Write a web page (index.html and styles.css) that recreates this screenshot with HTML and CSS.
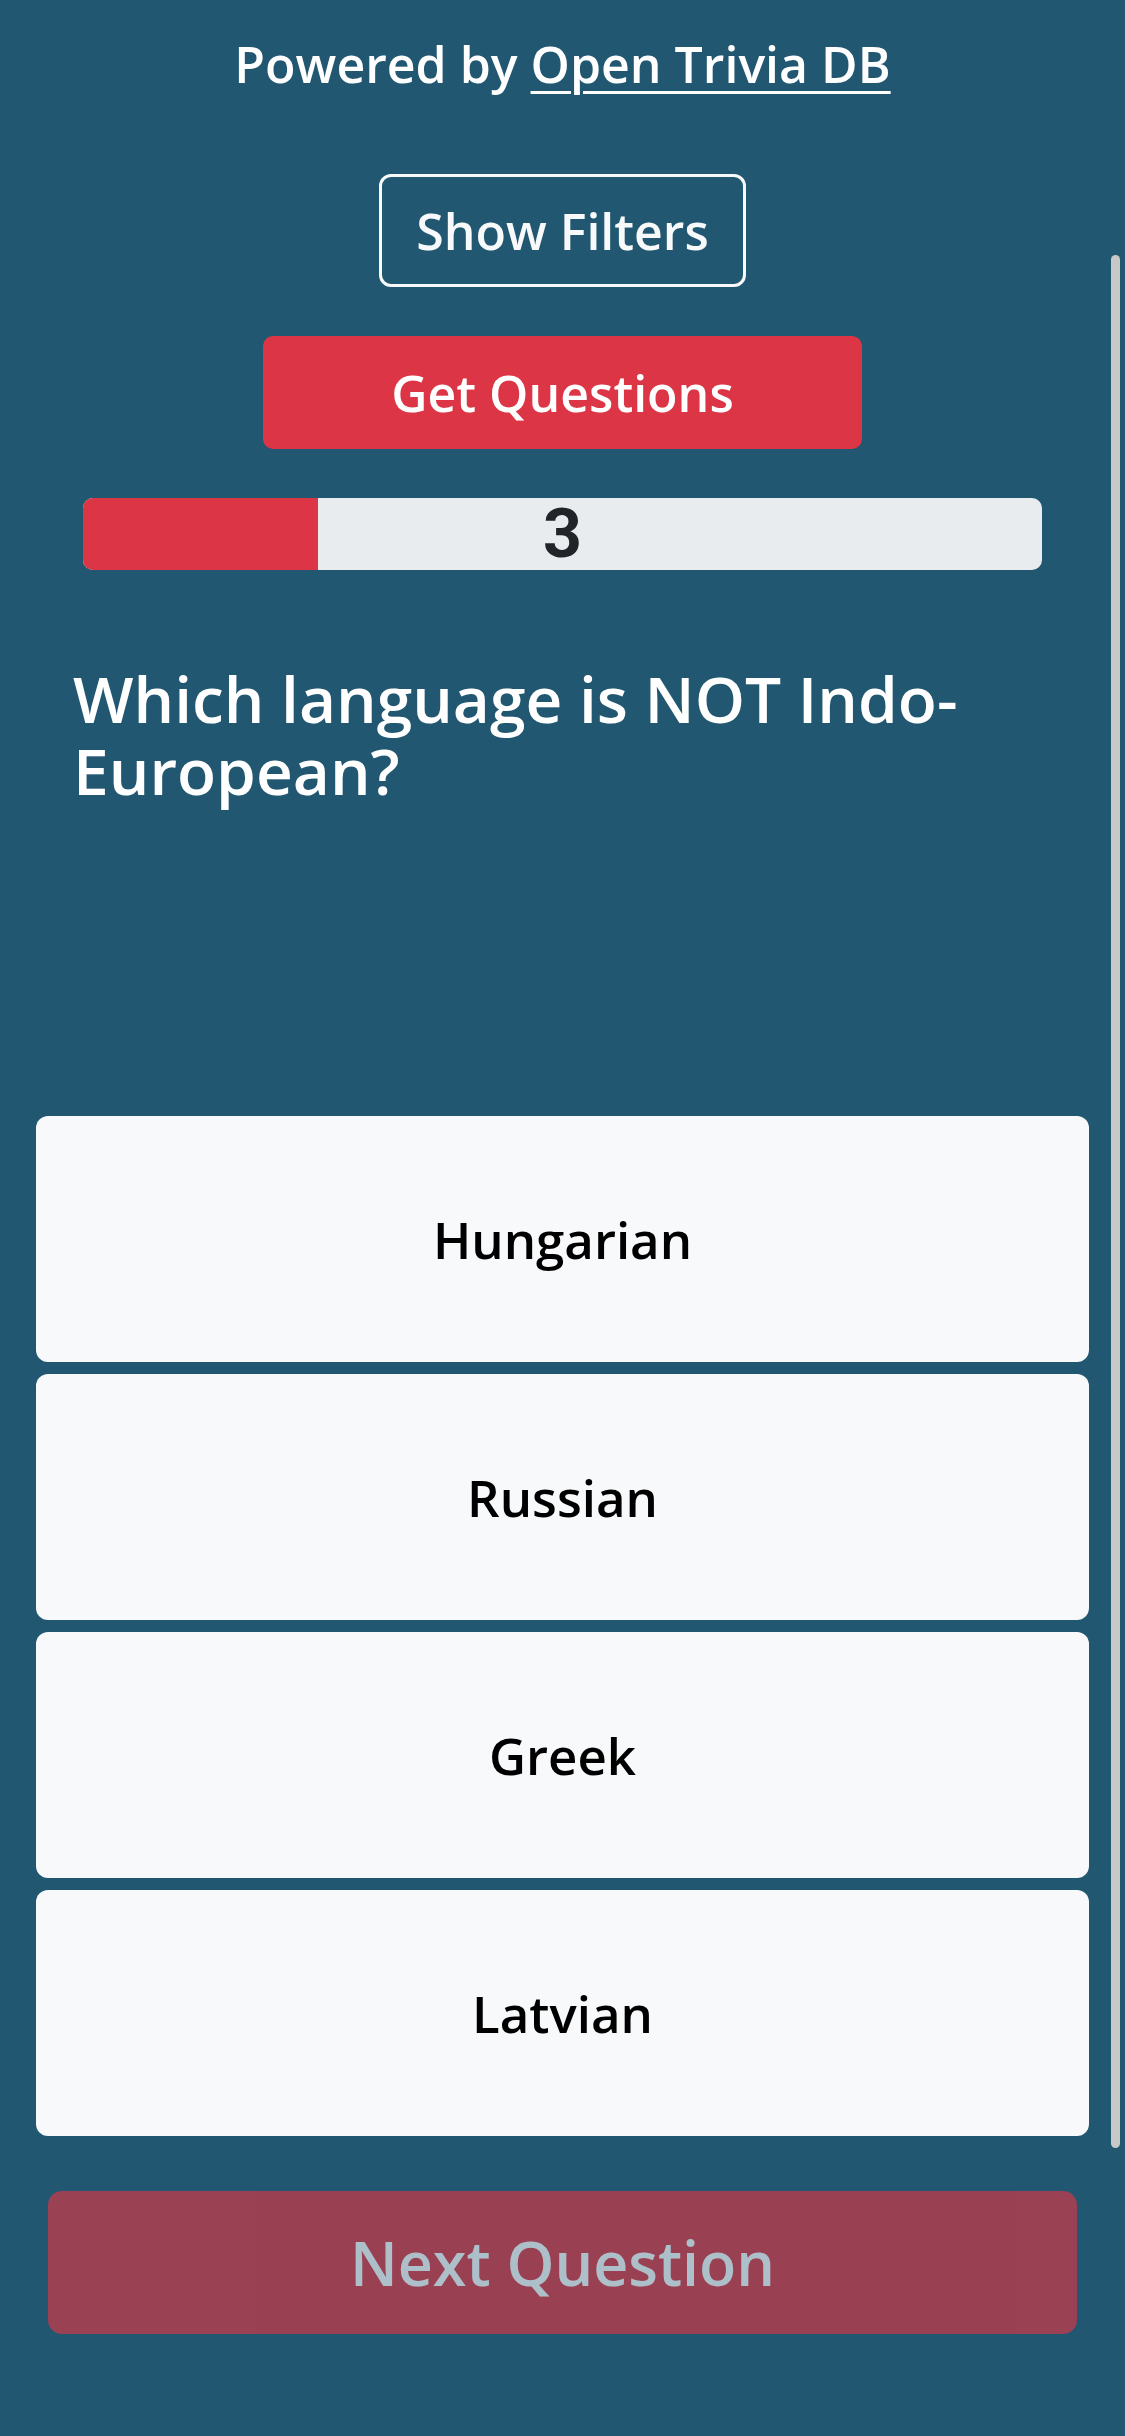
FILE: index.html
```html
<!DOCTYPE html>
<html lang="en">
<head>
<meta charset="utf-8">
<title>Trivia</title>
<link rel="stylesheet" href="styles.css">
</head>
<body>
<div class="page">
  <p class="powered">Powered by <a class="powered-link" href="#">Open Trivia DB</a></p>
  <button class="btn-outline" type="button">Show Filters</button>
  <button class="btn-get" type="button">Get Questions</button>
  <div class="progress">
    <div class="progress-bar" style="width: 24.5%"></div>
    <span class="progress-label">3</span>
  </div>
  <h2 class="question">Which language is NOT Indo-European?</h2>
  <div class="answers">
    <button class="answer" type="button">Hungarian</button>
    <button class="answer" type="button">Russian</button>
    <button class="answer" type="button">Greek</button>
    <button class="answer" type="button">Latvian</button>
  </div>
  <button class="btn-next" type="button" disabled>Next Question</button>
  <div class="scrollbar"></div>
</div>
</body>
</html>
```

FILE: styles.css
```css
html, body {
  margin: 0;
  padding: 0;
  background: #215770;
}
body {
  font-family: "Open Sans", "Noto Sans", sans-serif;
  color: #f8f9fa;
  width: 1125px;
  height: 2436px;
  overflow: hidden;
}
.page {
  position: relative;
  display: flex;
  flex-direction: column;
  align-items: center;
  padding: 0 36px;
  height: 2436px;
  box-sizing: border-box;
}
.powered {
  margin: 31px 0 0;
  font-size: 50px;
  line-height: 66px;
  font-weight: 600;
  color: #ffffff;
}
.powered-link {
  color: #ffffff;
  text-decoration: underline;
  text-decoration-thickness: 3px;
  text-underline-offset: 8px;
}
button {
  font-family: inherit;
  border: none;
  cursor: pointer;
}
.btn-outline {
  margin-top: 77px;
  width: 367px;
  height: 113px;
  background: transparent;
  border: 3px solid #f8f9fa;
  border-radius: 12px;
  color: #f8f9fa;
  font-size: 50px;
  font-weight: 600;
}
.btn-get {
  margin-top: 49px;
  width: 599px;
  height: 113px;
  background: #dc3545;
  border-radius: 10px;
  color: #ffffff;
  font-size: 50px;
  font-weight: 600;
}
.progress {
  position: relative;
  margin-top: 49px;
  width: 959px;
  height: 72px;
  background: #e9ecef;
  border-radius: 10px;
  display: flex;
  align-items: center;
  justify-content: center;
}
.progress-bar {
  position: absolute;
  left: 0;
  top: 0;
  bottom: 0;
  background: #dc3545;
  border-radius: 10px 0 0 10px;
}
.progress-label {
  position: relative;
  font-family: Roboto, "Liberation Sans", sans-serif;
  font-weight: 700;
  font-size: 68px;
  line-height: 1;
  color: #212529;
}
.question {
  align-self: stretch;
  margin: 93px 0 0;
  padding: 0 37px;
  min-height: 453px;
  box-sizing: border-box;
  font-size: 64px;
  line-height: 72px;
  font-weight: 600;
  color: #ffffff;
}
.answers {
  align-self: stretch;
  display: flex;
  flex-direction: column;
  gap: 12px;
}
.answer {
  height: 246px;
  background: #f8f9fa;
  border-radius: 12px;
  color: #000000;
  font-size: 51px;
  font-weight: 600;
}
.btn-next {
  margin-top: 55px;
  width: 1029px;
  height: 143px;
  background: #dc3545;
  border-radius: 14px;
  color: #f8f9fa;
  font-size: 61px;
  font-weight: 600;
  opacity: 0.65;
  cursor: default;
}
.scrollbar {
  position: absolute;
  right: 5px;
  top: 255px;
  width: 9px;
  height: 1893px;
  border-radius: 5px;
  background: #c8c8c8;
}
```
